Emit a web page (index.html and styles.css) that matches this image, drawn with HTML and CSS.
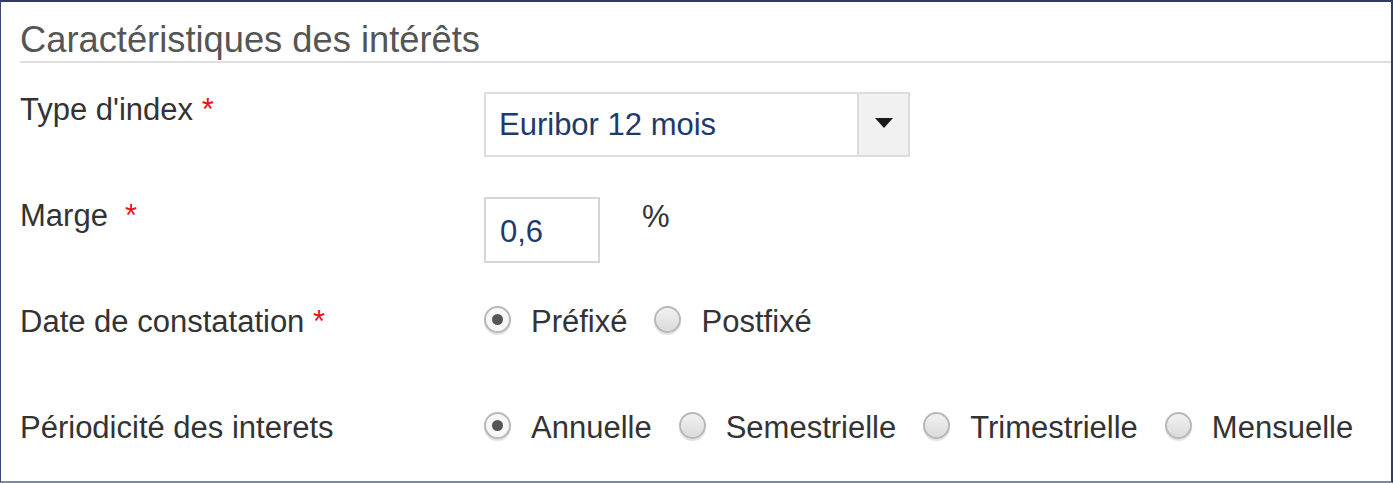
FILE: index.html
```html
<!DOCTYPE html>
<html lang="fr">
<head>
<meta charset="utf-8">
<title>Caractéristiques des intérêts</title>
<link rel="stylesheet" href="styles.css">
</head>
<body>
<div class="panel">
  <h2 class="panel-title">Caractéristiques des intérêts</h2>
  <div class="form">
    <div class="row">
      <div class="label">Type d'index <span class="req">*</span></div>
      <div class="control">
        <div class="select">
          <span class="select-value">Euribor 12 mois</span>
          <span class="select-btn">
            <svg width="18" height="10" viewBox="0 0 18 10"><path d="M0 0 H18 L9 10 Z" fill="#1a1a1a"/></svg>
          </span>
        </div>
      </div>
    </div>
    <div class="row">
      <div class="label">Marge&nbsp; <span class="req">*</span></div>
      <div class="control control-marge">
        <div class="input">0,6</div>
        <span class="unit">%</span>
      </div>
    </div>
    <div class="row">
      <div class="label">Date de constatation <span class="req">*</span></div>
      <div class="control radios">
        <label class="opt"><span class="radio checked"></span>Préfixé</label>
        <label class="opt"><span class="radio"></span>Postfixé</label>
      </div>
    </div>
    <div class="row">
      <div class="label">Périodicité des interets</div>
      <div class="control radios">
        <label class="opt"><span class="radio checked"></span>Annuelle</label>
        <label class="opt"><span class="radio"></span>Semestrielle</label>
        <label class="opt"><span class="radio"></span>Trimestrielle</label>
        <label class="opt"><span class="radio"></span>Mensuelle</label>
      </div>
    </div>
  </div>
</div>
</body>
</html>
```

FILE: styles.css
```css
html, body {
  margin: 0;
  padding: 0;
  background: #ffffff;
}

body {
  font-family: "Liberation Sans", Arial, Helvetica, sans-serif;
  color: #333333;
}

.panel {
  box-sizing: border-box;
  width: 1393px;
  height: 483px;
  border-top: 2px solid #2f3b63;
  border-left: 1px solid #3a4670;
  border-right: 2px solid #2f3b63;
  border-bottom: 2px solid #7d88a3;
  padding: 0 0 0 19px;
  overflow: hidden;
}

.panel-title {
  margin: 17px 0 0 0;
  font-size: 36.3px;
  font-weight: normal;
  line-height: 41px;
  color: #555555;
  border-bottom: 2px solid #dedede;
  padding-bottom: 1px;
}

.form {
  display: flex;
  flex-direction: column;
  gap: 40px;
  margin-top: 28px;
}

.row {
  display: grid;
  grid-template-columns: 464px 1fr;
  align-items: start;
  min-height: 66px;
  font-size: 31px;
  line-height: 35px;
}

.label {
  color: #333333;
  padding-top: 1px;
}

.req {
  color: #e8121b;
}

.control {
  display: flex;
  align-items: flex-start;
}

.select {
  box-sizing: border-box;
  width: 426px;
  height: 65px;
  border: 2px solid #dcdcdc;
  display: flex;
  align-items: stretch;
  margin-top: 1px;
}

.select-value {
  flex: 1;
  display: flex;
  align-items: center;
  padding-left: 13px;
  color: #1e3a6a;
}

.select-btn {
  width: 51px;
  border-left: 2px solid #dcdcdc;
  background: #f1f1f1;
  display: flex;
  align-items: center;
  justify-content: center;
  padding-bottom: 4px;
  box-sizing: border-box;
}

.control-marge {
  gap: 42px;
}

.input {
  box-sizing: border-box;
  width: 116px;
  height: 66px;
  border: 2px solid #d6d6d6;
  padding-left: 14px;
  color: #1e3a6a;
  display: flex;
  align-items: center;
  padding-top: 2px;
}

.unit {
  color: #333333;
  padding-top: 2px;
}

.radios {
  gap: 27px;
  padding-top: 1px;
}

.opt {
  display: flex;
  align-items: center;
  gap: 20px;
  color: #333333;
}

.radio {
  box-sizing: border-box;
  width: 27px;
  height: 27px;
  border-radius: 50%;
  border: 2px solid #b8b8b8;
  background: linear-gradient(#f2f2f2, #dadada);
  box-shadow: 0 2px 1px rgba(0, 0, 0, 0.12);
  display: flex;
  align-items: center;
  justify-content: center;
  margin-top: -5px;
}

.radio.checked {
  background: #f7f7f7;
}

.radio.checked::after {
  content: "";
  width: 11px;
  height: 11px;
  border-radius: 50%;
  background: #555555;
}
```
